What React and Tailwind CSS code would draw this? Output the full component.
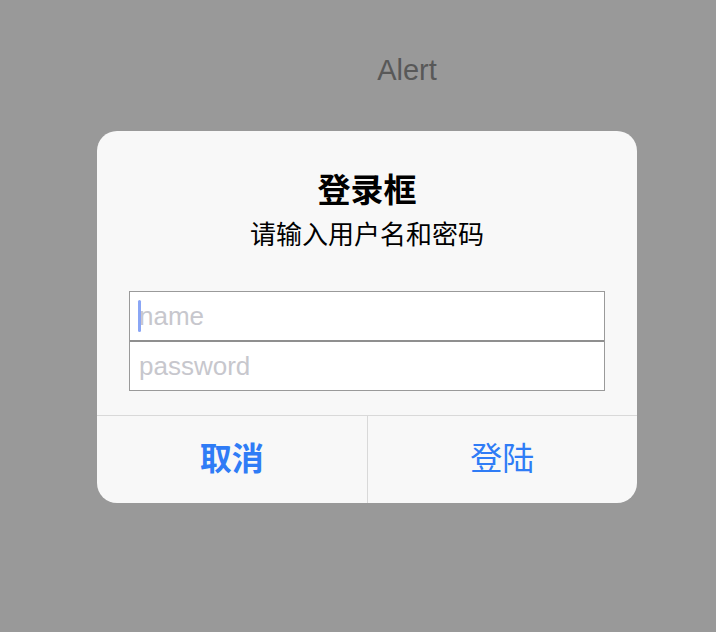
export default function App() {
  return (
    <div
      className="flex h-[632px] w-[716px] flex-col items-center bg-[#999999]"
      style={{ fontFamily: '"Liberation Sans", "Noto Sans CJK SC", sans-serif' }}
    >
      <div className="mt-[52px] ml-[98px] text-[29px] leading-[36px] text-[#585858]">Alert</div>

      <div className="mt-[43px] ml-[18px] flex w-[540px] flex-col overflow-hidden rounded-[20px] bg-[#f8f8f8]">
        <div className="flex flex-col items-center pt-[40px]">
          <div className="text-[33px] font-bold leading-[40px] text-black">登录框</div>
          <div className="mt-[7px] text-[26px] leading-[34px] text-black">请输入用户名和密码</div>
        </div>

        <div className="mx-[32px] mt-[39px] flex flex-col border border-[#9a9a9a] bg-white">
          <div className="relative flex h-[50px] items-center border-b-2 border-[#8f8f8f] pl-[9px]">
            <span className="absolute left-[8px] top-[8px] h-[32px] w-[3px] rounded-sm bg-[#8aa6f5]" />
            <span className="text-[26px] text-[#c7c7cd]">name</span>
          </div>
          <div className="flex h-[48px] items-center pl-[9px]">
            <span className="text-[26px] text-[#c7c7cd]">password</span>
          </div>
        </div>

        <div className="mt-[24px] flex h-[88px] border-t border-[#d9d9d9]">
          <button className="flex flex-1 items-center justify-center pb-[2px] text-[32px] font-bold text-[#2f7cf6]">
            取消
          </button>
          <div className="w-px bg-[#d9d9d9]" />
          <button className="flex flex-1 items-center justify-center pb-[2px] text-[32px] text-[#2f7cf6]">
            登陆
          </button>
        </div>
      </div>
    </div>
  );
}
